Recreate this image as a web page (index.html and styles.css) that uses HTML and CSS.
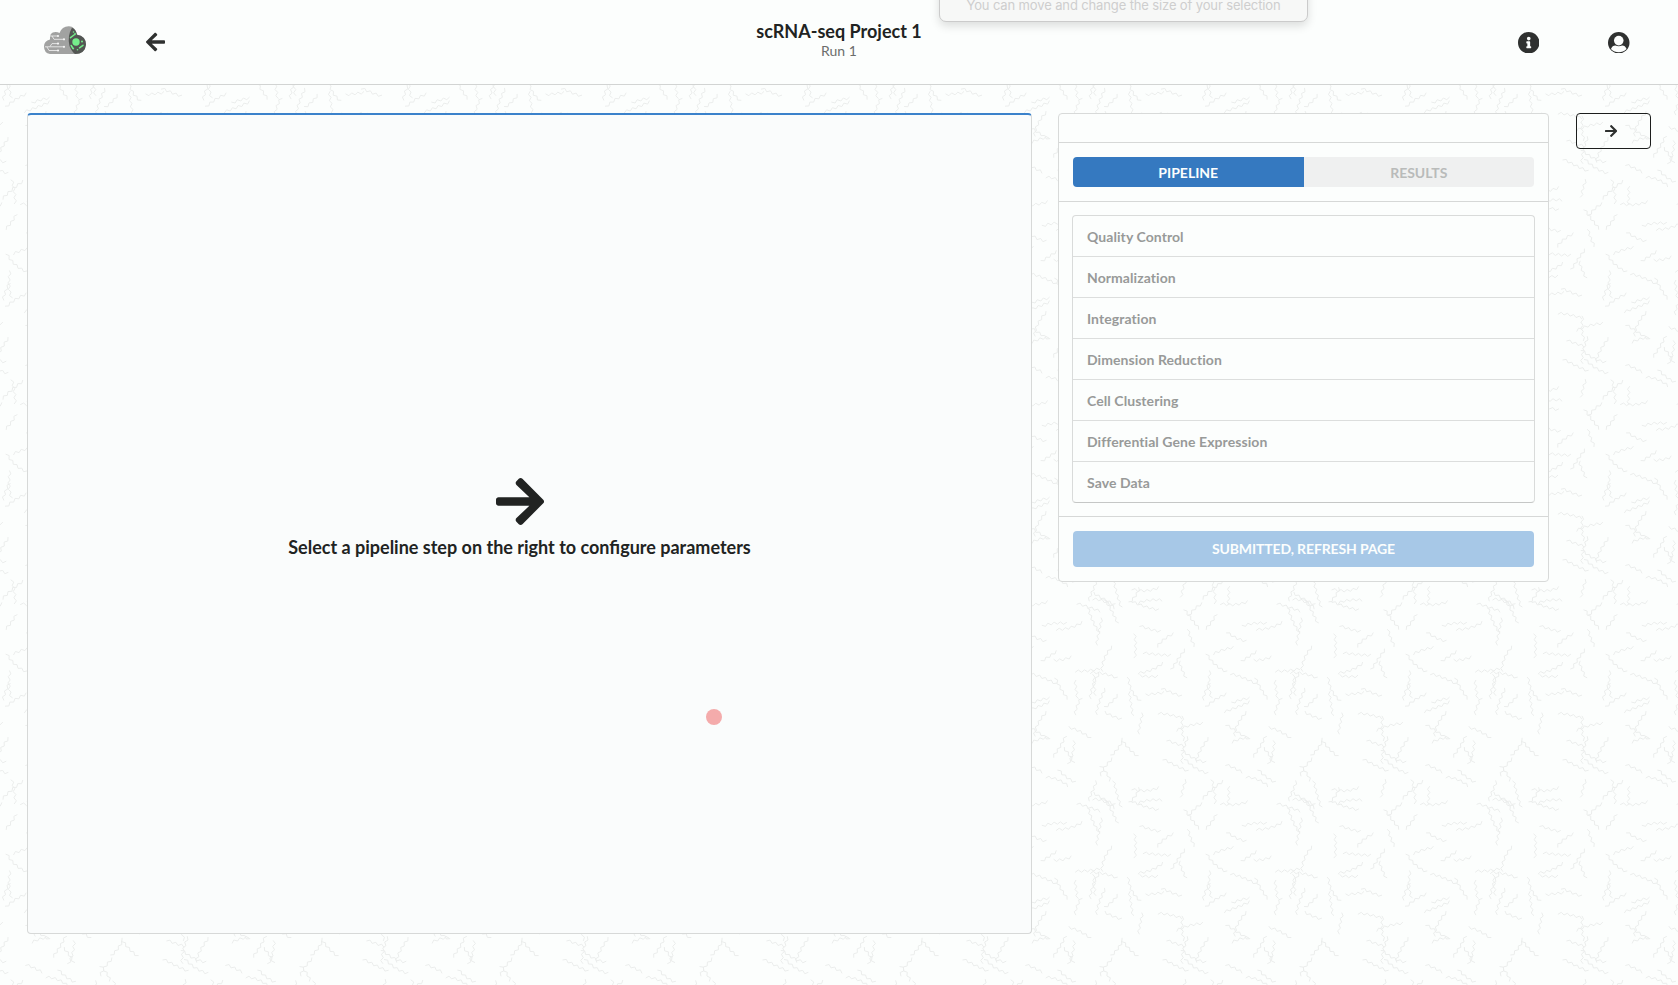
FILE: index.html
```html
<!DOCTYPE html>
<html lang="en">
<head>
<meta charset="utf-8">
<title>scRNA-seq Project 1</title>
<link rel="stylesheet" href="styles.css">
</head>
<body>
<svg class="wallpaper" aria-hidden="true">
  <defs><pattern id="squiggles" width="200" height="200" patternUnits="userSpaceOnUse"></pattern></defs>
  <rect width="100%" height="100%" fill="url(#squiggles)"/>
</svg>
<svg width="0" height="0" class="sprite" aria-hidden="true">
  <symbol id="arrow" viewBox="0 0 448 512"><path d="M190.5 66.9l22.2-22.2c9.4-9.4 24.6-9.4 33.9 0L441 239c9.4 9.4 9.4 24.6 0 33.9L246.6 467.3c-9.4 9.4-24.6 9.4-33.9 0l-22.2-22.2c-9.5-9.5-9.3-25 .4-34.3L311.4 296H24c-13.3 0-24-10.7-24-24v-32c0-13.3 10.7-24 24-24h287.4L190.9 101.2c-9.8-9.3-10-24.8-.4-34.3z"/></symbol>
</svg>
<header class="topbar">
  <nav class="nav-left">
    <svg class="logo" viewBox="0 0 42 28">
      <path d="M6 28Q0 27 0 20.5Q0 15 6 13.500Q5 6 11.500 6Q14 6 15.500 7Q18 0 25 .2Q31 .4 33 8.500Q42 11 42 19Q41 27 33 28Z" fill="#a1a2a1"/>
      <path d="M28 1.700Q32 3 33 8.700Q42 10 42 18.500Q41 28 31 28Q28 26 25.500 20Q23 10 28 1.700Z" fill="#535653"/>
      <g fill="none" stroke="#f4f4f4" stroke-width=".8"><path d="M6 10H14M8 10L10 13.300H20M1 20.800H20M6 20.500L8 17.600H14M3 21L5 24.500H14"/></g>
      <g fill="#f4f4f4"><circle cx="14" cy="10" r="1.100"/><circle cx="20" cy="13.300" r="1.100"/><circle cx="14" cy="17.600" r="1.100"/><circle cx="20" cy="20.800" r="1.100"/><circle cx="14" cy="24.500" r="1.100"/></g>
      <g fill="#75ef8b"><circle cx="32" cy="16" r="3.700"/><circle cx="29.500" cy="6" r=".8"/><circle cx="38" cy="15.500" r="1"/><circle cx="33.500" cy="23.700" r=".8"/><circle cx="29.400" cy="22.600" r=".8"/></g>
      <path d="M26.500 11.700L30 9M27.200 19.500L29 22.500M35.500 21.800L39 19.300M31 8.500V7.500" fill="none" stroke="#75ef8b" stroke-width="1.500" stroke-linecap="round"/>
    </svg>
    <svg class="icon back"><use href="#arrow"/></svg>
  </nav>
  <div class="titles"><h1 class="title">scRNA-seq Project 1</h1><div class="subtitle">Run 1</div></div>
  <nav class="nav-right">
    <svg class="icon round" viewBox="8 8 496 496"><path d="M256 8C119 8 8 119 8 256s111 248 248 248 248-111 248-248S393 8 256 8zm0 110c23.200 0 42 18.800 42 42s-18.800 42-42 42-42-18.800-42-42 18.800-42 42-42zm56 254c0 6.600-5.400 12-12 12h-88c-6.600 0-12-5.400-12-12v-24c0-6.600 5.400-12 12-12h12v-64h-12c-6.600 0-12-5.400-12-12v-24c0-6.600 5.400-12 12-12h64c6.600 0 12 5.400 12 12v100h12c6.600 0 12 5.400 12 12v24z"/></svg>
    <svg class="icon round" viewBox="0 0 22 22"><circle cx="11" cy="11" r="11"/><path d="M3 17.300Q4.500 13.800 7.500 13.800Q11 15.500 14.500 13.800Q17.500 13.800 19 17.300Q15.500 20.700 11 20.700Q6.500 20.700 3 17.300Z" fill="#fcfefd"/><circle cx="11" cy="8.800" r="4.900" fill="#fcfefd"/></svg>
  </nav>
</header>
<div class="capture-hint">You can move and change the size of your selection</div>
<main class="workspace">
  <section class="stage">
    <svg class="icon big-arrow"><use href="#arrow"/></svg>
    <h2 class="prompt">Select a pipeline step on the right to configure parameters</h2>
  </section>
  <aside class="sidebar">
    <div class="blank"></div>
    <div class="section tabs"><div class="tab active">PIPELINE</div><div class="tab">RESULTS</div></div>
    <div class="section">
      <ul class="steps">
        <li class="step">Quality Control</li>
        <li class="step">Normalization</li>
        <li class="step">Integration</li>
        <li class="step">Dimension Reduction</li>
        <li class="step">Cell Clustering</li>
        <li class="step">Differential Gene Expression</li>
        <li class="step">Save Data</li>
      </ul>
    </div>
    <div class="section"><button class="submit" disabled>SUBMITTED, REFRESH PAGE</button></div>
  </aside>
  <button class="collapse" aria-label="Collapse"><svg class="icon small-arrow"><use href="#arrow"/></svg></button>
</main>
<div class="pointer"></div>
<script src="wallpaper.js"></script>
</body>
</html>
```
FILE: styles.css
```css
* { box-sizing: border-box; }
body {
  margin: 0;
  height: 985px;
  overflow: hidden;
  background: #fcfefd;
  color: #212322;
  font: 14px/20px Lato, "Open Sans", sans-serif;
}
.wallpaper { position: absolute; inset: 0; width: 100%; height: 100%; z-index: -1; }
.squiggle { fill: none; stroke: #ebedec; stroke-width: 1; }
.sprite { position: absolute; }
.icon { fill: #2f3130; display: block; }
.topbar {
  height: 85px;
  display: grid;
  grid-template-columns: 1fr auto 1fr;
  background: #fcfefd;
  border-bottom: 1px solid #d2d4d3;
}
.nav-left, .nav-right { display: flex; align-items: center; }
.nav-left { padding-left: 44px; gap: 59.500px; }
.nav-right { justify-content: flex-end; padding: 1px 48.500px 0 0; gap: 69px; }
.logo { width: 42px; height: 28px; margin-top: -4px; }
.back { width: 19px; height: 22px; transform: scaleX(-1); }
.round { width: 21.500px; height: 21.500px; }
.titles { padding-top: 20px; text-align: center; }
.title { margin: 0; font-size: 18px; line-height: 23px; font-weight: 700; }
.subtitle { line-height: 16px; color: #6b6d6c; }
.capture-hint {
  position: absolute;
  left: 939px;
  top: -20px;
  width: 369px;
  height: 42px;
  padding-top: 14px;
  border: 1px solid #cbcbcb;
  border-radius: 7px;
  background: #f7f8f7;
  box-shadow: 0 4px 10px rgba(0, 0, 0, .13);
  color: #cecece;
  font: 13px/20px Inter, sans-serif;
  letter-spacing: -.13px;
  text-align: center;
  white-space: nowrap;
}
.workspace {
  display: grid;
  grid-template-columns: 1005px 490px 75px;
  align-items: start;
  column-gap: 27px;
  padding: 28px 0 0 27px;
}
.stage {
  height: 821px;
  display: flex;
  flex-direction: column;
  align-items: center;
  justify-content: center;
  padding: 0 20px 16px 0;
  border: 1px solid #d7d9d8;
  border-top: 2px solid #3b82cb;
  border-radius: 4px;
  background: #fafcfc;
}
.big-arrow { width: 48px; height: 55px; fill: #212322; }
.prompt { margin: 7px 0 0; font-size: 18px; line-height: 23px; font-weight: 700; }
.sidebar {
  margin-left: -1px;
  border: 1px solid #d8dad9;
  border-radius: 4px;
  background: #fcfefd;
}
.blank { height: 28px; }
.section { padding: 14px; border-top: 1px solid #d6d8d7; }
.tabs { display: flex; height: 59px; }
.tab {
  flex: 1;
  line-height: 31px;
  text-align: center;
  font-weight: 700;
  background: #eff0f0;
  color: #b9bbba;
  border-radius: 0 4px 4px 0;
}
.tab.active { background: #3579c0; color: #fcfefd; border-radius: 4px 0 0 4px; }
.steps {
  margin: -1px;
  padding: 0;
  list-style: none;
  border: 1px solid #d9dbda;
  border-bottom-color: #c5c7c6;
  border-radius: 4px;
}
.step {
  height: 41px;
  padding-left: 14px;
  line-height: 41px;
  font-weight: 700;
  font-variant-ligatures: none;
  letter-spacing: .07px;
  color: #989a99;
}
.step:first-child { height: 40px; }
.step + .step { border-top: 1px solid #dcdedd; }
.submit {
  display: block;
  width: 100%;
  height: 36px;
  padding: 0 0 1px;
  border: 0;
  border-radius: 4px;
  background: #a7c8e7;
  color: #fcfefd;
  font: 700 14px Lato, sans-serif;
  letter-spacing: -.13px;
}
.collapse {
  height: 36px;
  display: flex;
  align-items: center;
  justify-content: center;
  padding: 0 4px 0 0;
  border: 1px solid #1c1e1d;
  border-radius: 4px;
  background: transparent;
}
.small-arrow { width: 12.250px; height: 14px; }
.pointer {
  position: absolute;
  left: 706px;
  top: 709px;
  width: 16px;
  height: 16px;
  border-radius: 50%;
  background: #f4abab;
}
```
FILE: wallpaper.js
```js
// Fills the repeating tile with short, slightly bent zigzags on a jittered grid.
let seed = 20011;
const rand = () => (seed = (seed * 16807) % 2147483647) / 2147483647;
let paths = '';
for (let row = 0; row < 9; row++) {
  for (let col = 0; col < 9; col++) {
    const x0 = col * 22.2 + rand() * 12;
    const y0 = row * 22.2 + rand() * 12;
    let angle = rand() * Math.PI * 2;
    const bend = (rand() - 0.5) * 0.2;
    const count = 6 + Math.floor(rand() * 4);
    let x = x0;
    let y = y0;
    const points = [[x, y]];
    for (let i = 0; i < count; i++) {
      const heading = angle + (i % 2 ? 0.65 : -0.65);
      x += Math.cos(heading) * 3.9;
      y += Math.sin(heading) * 3.9;
      angle += bend;
      points.push([x, y]);
    }
    for (const dx of [-200, 0, 200]) {
      for (const dy of [-200, 0, 200]) {
        paths += `<path class="squiggle" d="M${points.map(p => (p[0] + dx).toFixed(1) + ' ' + (p[1] + dy).toFixed(1)).join('L')}"/>`;
      }
    }
  }
}
document.getElementById('squiggles').innerHTML = paths;
```
